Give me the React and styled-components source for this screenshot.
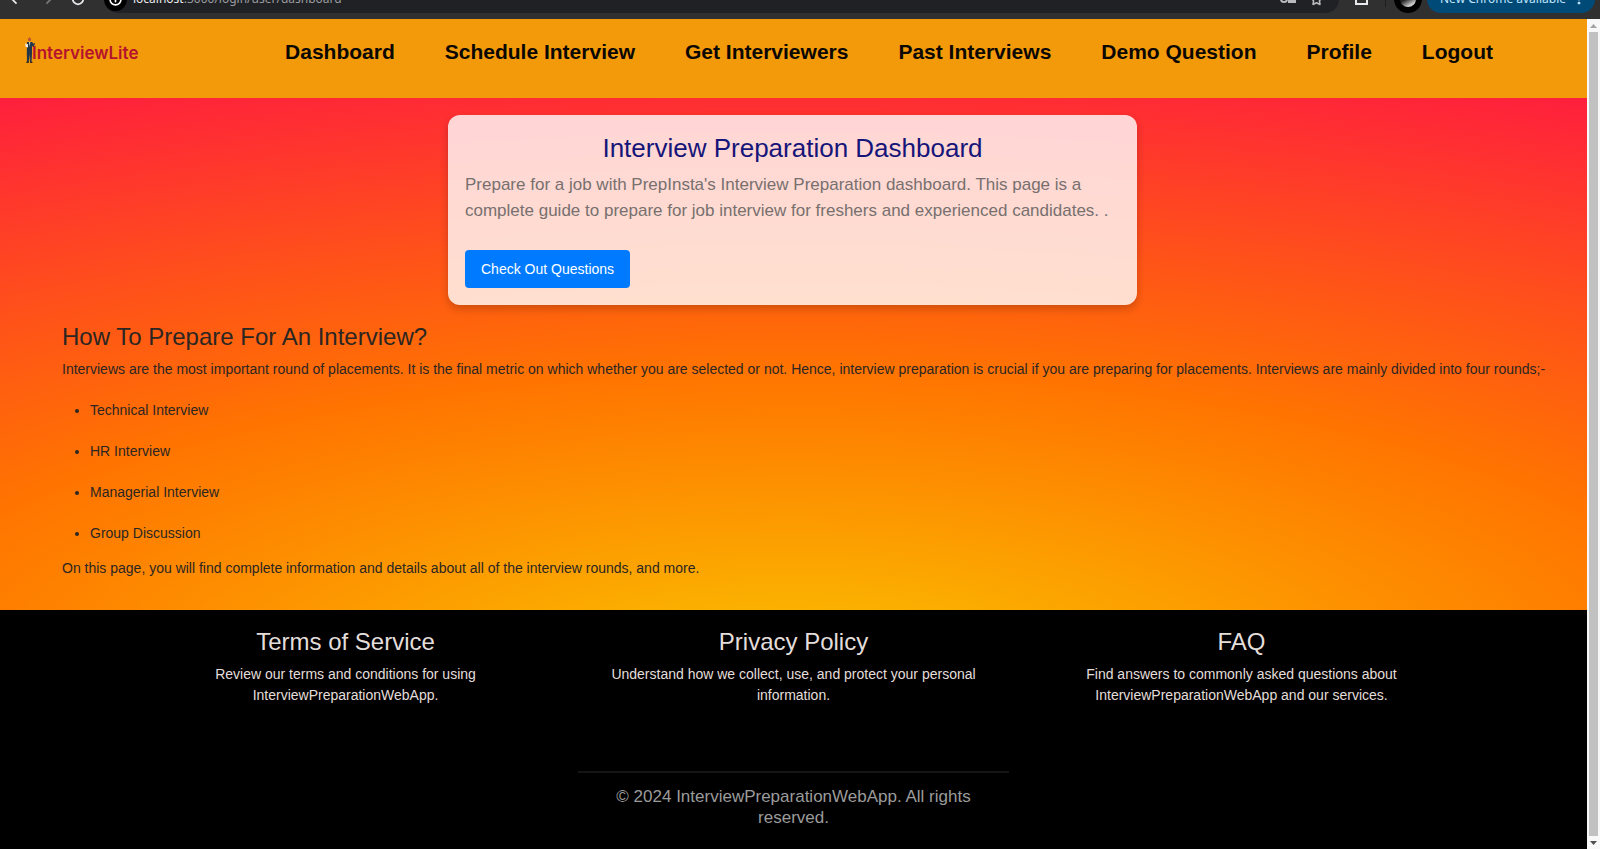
import React from "react";
import styled, { createGlobalStyle } from "styled-components";
import { ArrowLeft, ArrowRight, RotateCw, Info, Star, MoreVertical } from "lucide-react";

const GlobalStyle = createGlobalStyle`
  *, *::before, *::after { box-sizing: border-box; }
  body {
    margin: 0;
    overflow: hidden;
    font: 16px/24px "Liberation Sans", Arial, sans-serif;
    color: #2b2622;
  }
  h2, p, ul { margin: 0; }
  a { color: inherit; text-decoration: none; }
`;

const Screen = styled.div`
  height: 100vh;
  display: flex;
  flex-direction: column;
`;

/* Browser toolbar: only its lower edge shows, so its content hangs from the bottom. */
const Toolbar = styled.div`
  height: 19px;
  flex: none;
  display: flex;
  align-items: flex-end;
  padding: 0 5px 6px 9px;
  overflow: hidden;
  background: #303030;
  color: #e8eaed;
`;

const ToolGroup = styled.div`
  height: 28px;
  display: flex;
  align-items: center;
  gap: 17px;
  flex: none;
  padding-right: 19px;
`;

const ToolButton = styled.button`
  display: flex;
  flex: none;
  padding: 0;
  border: 0;
  background: none;
  color: ${(p) => (p.$dim ? "#77797c" : "#e8eaed")};
`;

const AddressBar = styled.div`
  flex: 1;
  height: 28px;
  display: flex;
  align-items: center;
  gap: 14px;
  padding-right: 16px;
  border-radius: 14px;
  background: #202124;
  color: #b9babd;
`;

const SiteBadge = styled.span`
  display: flex;
  margin-right: -8px;
  padding: 5px;
  border-radius: 50%;
  background: #000;
  color: #fff;
`;

const Address = styled.span`
  flex: 1;
  color: #9a9ca0;
  font: 12px/20px "Noto Sans", sans-serif;
  b { font-weight: 400; color: #e8eaed; }
`;

const Extras = styled.div`
  height: 28px;
  display: flex;
  align-items: center;
  flex: none;
  gap: 8px;
  padding: 0 5px 0 16px;
`;

const Separator = styled.span`
  width: 1px;
  height: 16px;
  margin-left: 8px;
  background: #1c1c1c;
`;

const Avatar = styled.span`
  width: 28px;
  height: 28px;
  border-radius: 50%;
  border: 6px solid #000;
  background: linear-gradient(150deg, #222 45%, #ccc 80%);
`;

const UpdateButton = styled.button`
  height: 28px;
  display: flex;
  align-items: center;
  gap: 6px;
  flex: none;
  padding: 0 9px 0 13px;
  border: 0;
  border-radius: 14px;
  background: #004a77;
  color: #c2e7ff;
  font: 12px/20px "Noto Sans", sans-serif;
`;

const Viewport = styled.div`
  flex: 1;
  min-height: 0;
  display: flex;
`;

const Page = styled.div`
  flex: 1;
  min-width: 0;
  display: flex;
  flex-direction: column;
  overflow: hidden;
`;

const Scrollbar = styled.div`
  width: 13px;
  flex: none;
  display: flex;
  flex-direction: column;
  align-items: center;
  background: #f8f8f8;
`;

const ScrollArrow = styled.span`
  height: 13px;
  display: flex;
  align-items: center;
  color: ${(p) => (p.$dim ? "#a3a3a3" : "#505050")};
`;

const ScrollThumb = styled.span`
  flex: 1;
  width: 9px;
  background: #c1c1c1;
`;

const Header = styled.header`
  height: 79px;
  flex: none;
  display: flex;
  justify-content: space-between;
  padding: 18px 94px 0 25px;
  background: #f39a0b;
`;

const Brand = styled.a`
  height: 26px;
  display: flex;
  align-items: flex-end;
  color: #b5132d;
  font: 600 17px/20px Inter, sans-serif;
`;

const Nav = styled.nav`
  display: flex;
  gap: 50px;
  color: #0b0703;
  font-weight: 700;
  font-size: 21px;
  line-height: 29px;
  white-space: nowrap;
`;

const Main = styled.main`
  flex: none;
  padding: 17px 32px 31px 62px;
  background: radial-gradient(ellipse 123% 125% at 50% 114%, #fac300, #ff7500 48%, #ff1f3d);
`;

const Card = styled.section`
  width: 689px;
  margin: 0 auto 19px;
  padding: 17px;
  border-radius: 12px;
  background: rgba(255, 255, 255, 0.8);
  box-shadow: 0 4px 8px rgba(0, 0, 0, 0.2);
`;

const CardRow = styled.div`
  padding-right: 32px;
`;

const CardTitle = styled.h2`
  margin-bottom: 8px;
  text-align: center;
  color: #15157a;
  font-weight: 400;
  font-size: 26px;
  line-height: 32px;
`;

const CardText = styled.p`
  margin-bottom: 26px;
  color: #77706f;
  font-size: 17px;
  line-height: 26px;
`;

const PrimaryButton = styled.button`
  display: block;
  height: 38px;
  padding: 0 16px;
  border: 0;
  border-radius: 4px;
  background: #007bff;
  color: #fff;
  font: 14px/20px "Liberation Sans", Arial, sans-serif;
`;

const SectionTitle = styled.h2`
  margin-bottom: 9px;
  font-weight: 400;
  font-size: 24px;
  line-height: 26px;
`;

const Text = styled.p`
  font-size: 14px;
  line-height: 21px;
`;

const Rounds = styled.ul`
  padding: 10px 0 4px 28px;
  font-size: 14px;
  line-height: 21px;
  li { padding: 10px 0; }
`;

const Footer = styled.footer`
  flex: 1;
  display: flex;
  flex-direction: column;
  align-items: center;
  background: #000;
  color: #e4dedb;
  text-align: center;
`;

const FooterColumns = styled.div`
  width: 100%;
  display: grid;
  grid-template-columns: repeat(3, 448px);
  justify-content: center;
  padding: 19px 0 65px;
`;

const FooterColumn = styled.section`
  padding: 0 40px;
`;

const Copyright = styled.p`
  width: 431px;
  padding: 13px 30px;
  border-top: 2px solid #151515;
  color: #9b9b9b;
  font-size: 17px;
  line-height: 21px;
`;

const NAV_ITEMS = ["Dashboard", "Schedule Interview", "Get Interviewers", "Past Interviews", "Demo Question", "Profile", "Logout"];
const ROUNDS = ["Technical Interview", "HR Interview", "Managerial Interview", "Group Discussion"];
const FOOTER_ITEMS = [
  ["Terms of Service", "Review our terms and conditions for using InterviewPreparationWebApp."],
  ["Privacy Policy", "Understand how we collect, use, and protect your personal information."],
  ["FAQ", "Find answers to commonly asked questions about InterviewPreparationWebApp and our services."],
];

function BrandFigure() {
  return (
    <svg width="7" height="26" viewBox="0 0 7 26" overflow="visible" aria-hidden="true">
      <circle cx="4.500" cy="2.600" r="1.600" fill="#b5573a" />
      <path d="M3 1.600 4.500.2 6 1.600z" fill="#d23a22" />
      <path d="M2 5h5l2 2L9.500 5.500l.5 1.500-1.600 3-1.400-1v8l-.5 8H5l-.6-8-.6 8H2l-.2-8z" fill="#25384a" />
      <path d="M4 5h1.200l-.4 5z" fill="#e8e3da" />
      <path d="M.3 6.500 3 7.200v3.300L.5 9.800z" fill="#f3ead8" />
      <path d="M1.400 24.600h2.400V26H1.400zM5 24.600h2.400V26H5z" fill="#3a2a22" />
    </svg>
  );
}

export default function App() {
  return (
    <Screen>
      <GlobalStyle />
      <Toolbar>
        <ToolGroup>
          <ToolButton aria-label="Back"><ArrowLeft size={14} strokeWidth={3} /></ToolButton>
          <ToolButton aria-label="Forward" $dim><ArrowRight size={14} strokeWidth={3} /></ToolButton>
          <ToolButton aria-label="Reload"><RotateCw size={14} strokeWidth={3} /></ToolButton>
        </ToolGroup>
        <AddressBar>
          <SiteBadge><Info size={13} strokeWidth={3} /></SiteBadge>
          <Address><b>localhost</b>:3000/login/user/dashboard</Address>
          <svg width="16" height="10" viewBox="0 0 16 10" fill="none" stroke="currentColor" strokeWidth="2" aria-hidden="true">
            <circle cx="4" cy="5" r="3" />
            <path d="M7 4h8v4h-2V6h-2v2H9V6" />
          </svg>
          <Star size={13} strokeWidth={3} />
        </AddressBar>
        <Extras>
          <ToolButton aria-label="Extensions">
            <svg width="14" height="12" viewBox="0 0 14 12" fill="none" stroke="currentColor" strokeWidth="2"><path d="M1 3h4V1h4v2h3v8H1z" /></svg>
          </ToolButton>
          <Separator />
          <Avatar />
        </Extras>
        <UpdateButton>New Chrome available <MoreVertical size={14} strokeWidth={3} /></UpdateButton>
      </Toolbar>
      <Viewport>
        <Page>
          <Header>
            <Brand href="#"><BrandFigure />InterviewLite</Brand>
            <Nav>{NAV_ITEMS.map((item) => <a key={item} href="#">{item}</a>)}</Nav>
          </Header>
          <Main>
            <CardRow>
              <Card>
                <CardTitle>Interview Preparation Dashboard</CardTitle>
                <CardText>Prepare for a job with PrepInsta's Interview Preparation dashboard. This page is a complete guide to prepare for job interview for freshers and experienced candidates. .</CardText>
                <PrimaryButton>Check Out Questions</PrimaryButton>
              </Card>
            </CardRow>
            <SectionTitle>How To Prepare For An Interview?</SectionTitle>
            <Text>Interviews are the most important round of placements. It is the final metric on which whether you are selected or not. Hence, interview preparation is crucial if you are preparing for placements. Interviews are mainly divided into four rounds;-</Text>
            <Rounds>{ROUNDS.map((round) => <li key={round}>{round}</li>)}</Rounds>
            <Text>On this page, you will find complete information and details about all of the interview rounds, and more.</Text>
          </Main>
          <Footer>
            <FooterColumns>
              {FOOTER_ITEMS.map(([title, text]) => (
                <FooterColumn key={title}>
                  <SectionTitle>{title}</SectionTitle>
                  <Text>{text}</Text>
                </FooterColumn>
              ))}
            </FooterColumns>
            <Copyright>© 2024 InterviewPreparationWebApp. All rights reserved.</Copyright>
          </Footer>
        </Page>
        <Scrollbar aria-hidden="true">
          <ScrollArrow $dim><svg width="7" height="4" viewBox="0 0 7 4"><path d="M0 4 3.500 0 7 4z" fill="currentColor" /></svg></ScrollArrow>
          <ScrollThumb />
          <ScrollArrow><svg width="7" height="4" viewBox="0 0 7 4"><path d="M0 0h7L3.500 4z" fill="currentColor" /></svg></ScrollArrow>
        </Scrollbar>
      </Viewport>
    </Screen>
  );
}
